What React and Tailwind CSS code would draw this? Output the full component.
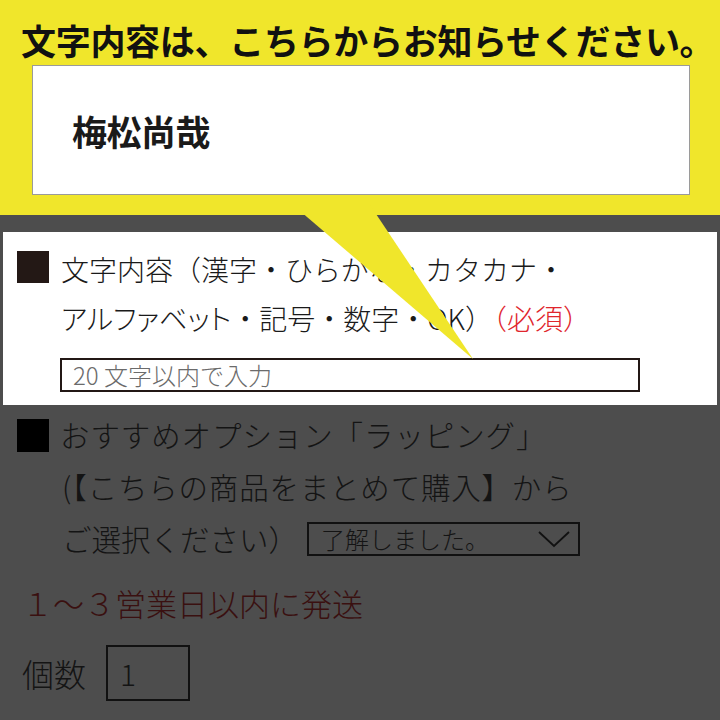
export default function App() {
  const jp = { fontFamily: '"Noto Sans CJK JP", "Noto Sans", sans-serif' };
  return (
    <div className="relative w-[720px] h-[720px] overflow-hidden bg-[#4d4d4d]" style={jp}>
      {/* Yellow header */}
      <div className="h-[215px] bg-[#f0e62b] pt-[19px]">
        <div className="pl-[21px] text-[35px] leading-[41px] font-bold text-[#111] tracking-[-0.3px] whitespace-nowrap">
          文字内容は、こちらからお知らせください。
        </div>
        <div className="ml-[32px] mt-[5px] w-[658px] h-[130px] bg-white border border-[#9a9a9a] flex items-center pl-[39px]">
          <span className="text-[35px] font-bold text-[#1a1a1a] leading-none tracking-[-0.5px]">梅松尚哉</span>
        </div>
      </div>

      {/* White panel */}
      <div className="mt-[17px] mx-[3px] h-[173px] bg-white pt-[13px]">
        <div className="flex">
          <div className="ml-[14px] mt-[6px] w-[32px] h-[32px] bg-[#231815] shrink-0" />
          <div className="ml-[12px] text-[28px] leading-[49px] text-[#1a1a1a] font-light whitespace-nowrap">
            <div>文字内容（漢字・ひらがな・カタカナ・</div>
            <div>
              <span className="[font-feature-settings:'palt']">アルファベット</span>・記号・数字・OK）<span className="text-[#e0262d]">（必須）</span>
            </div>
          </div>
        </div>
        <div className="ml-[57px] mt-[15px] w-[580px] h-[34px] border-2 border-[#231815] flex items-center pl-[11px] text-[24px] text-[#6b6b6b] font-light leading-none">
          20 文字以内で入力
        </div>
      </div>

      {/* Dimmed lower section */}
      <div className="text-[#141414] font-light">
        <div className="mt-[5px] h-[50px] flex items-center">
          <div className="ml-[17px] w-[32px] h-[33px] bg-black shrink-0" />
          <div className="ml-[11px] text-[29.5px] leading-none whitespace-nowrap tracking-[0.9px]">
            おすすめオプション「ラッピング」
          </div>
        </div>
        <div className="h-[54px] flex items-center pl-[62px] text-[29.5px] leading-none whitespace-nowrap tracking-[0.8px]">
          (【こちらの商品をまとめて購入】から
        </div>
        <div className="h-[50px] flex items-center pl-[62px] text-[29.5px] leading-none whitespace-nowrap">
          <span className="w-[245px]">ご選択ください）</span>
          <div className="w-[273px] h-[34px] border-2 border-[#111] flex items-center justify-between pl-[12px] pr-[8px]">
            <span className="text-[24px] leading-none">了解しました。</span>
            <svg width="32" height="18" viewBox="0 0 32 18">
              <polyline points="1,2 16,16 31,2" fill="none" stroke="#111" strokeWidth="1.8" />
            </svg>
          </div>
        </div>
        <div className="mt-[16px] h-[44px] flex items-center pl-[22px] text-[31px] leading-none text-[#3a1010] whitespace-nowrap">
          １～３営業日以内に発送
        </div>
        <div className="mt-[21px] flex items-center">
          <span className="ml-[22px] text-[32px] leading-none">個数</span>
          <div className="ml-[20px] w-[84px] h-[56px] border-2 border-[#111] flex items-center pl-[12px] text-[30px] leading-none">
            1
          </div>
        </div>
      </div>

      {/* Callout tail */}
      <svg className="absolute left-0 top-0 pointer-events-none" width="720" height="720" viewBox="0 0 720 720">
        <polygon points="293,205 370,205 473,359" fill="#f0e62b" />
      </svg>
    </div>
  );
}
